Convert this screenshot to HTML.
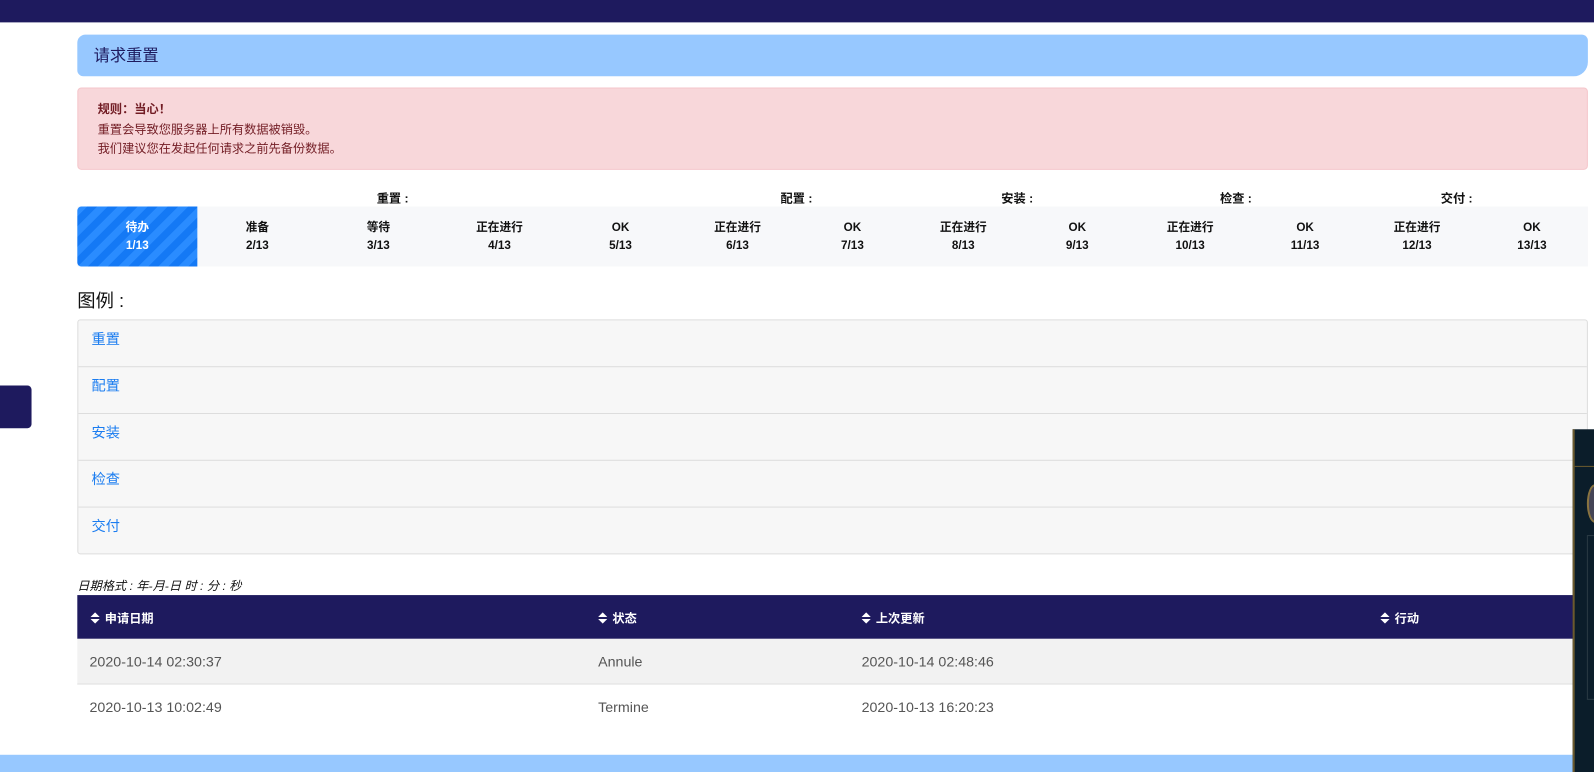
<!DOCTYPE html>
<html><head><meta charset="utf-8"><style>
html,body{margin:0;padding:0;background:#fff;overflow:hidden;width:1594px;height:772px}
#w{position:absolute;left:0;top:0;width:1567px;height:759px;transform:scale(1.01723);transform-origin:0 0;font-family:"Liberation Sans","Noto Sans CJK SC",sans-serif}
.a{position:absolute}
.top{left:0;top:0;width:1567px;height:22px;background:#1e1a5e}
.hdr{left:76px;top:34px;width:1485px;height:41px;background:#97c8ff;border-radius:8px 6px 14px 6px;color:#1e1a5e;font-size:16px;line-height:43px;box-sizing:border-box;padding-left:16px}
.al{left:76px;top:86px;width:1485px;height:81px;background:#f8d7da;border:1px solid #f5c6cb;box-sizing:border-box;border-radius:4px;color:#721c24;font-size:12px;padding:11px 0 0 19px;line-height:19.5px}
.lbl{top:186px;font-size:12px;font-weight:bold;color:#111;transform:translateX(-50%)}
.prog{left:76px;top:203px;width:1485px;height:59px;background:#f7f8fa}
.st{position:absolute;top:215px;font-size:11.5px;font-weight:bold;color:#111;text-align:center;line-height:18px;transform:translateX(-50%)}
.cur{left:76px;top:203px;width:118px;height:59px;border-radius:4px 0 0 4px;background:repeating-linear-gradient(135deg,#2a8cff 0 7px,#1479f5 7px 14px)}
.leg{left:76px;top:314px;width:1485px;border:1px solid #ddd;box-sizing:border-box;border-radius:3px;background:#f7f7f7}
.leg div{height:45px;border-top:1px solid #ddd;color:#1a7cf0;font-size:14px;line-height:36px;padding-left:13px}
.leg div:first-child{border-top:none}
.th{left:76px;top:585px;width:1485px;height:43px;background:#1e1a5e;color:#fff;font-size:12px;font-weight:bold}
.th span{position:absolute;top:14px}
.r{left:76px;width:1485px;height:44px;font-size:14px;color:#555;border-bottom:1px solid #ddd}
.r span{position:absolute;top:14px}
.si{display:inline-block;width:9px;height:11px;vertical-align:-1px;margin-right:5px}
</style></head><body><div id="w">
<div class="a top"></div>
<div class="a hdr">请求重置</div>
<div class="a al"><b>规则：当心！</b><br>重置会导致您服务器上所有数据被销毁。<br>我们建议您在发起任何请求之前先备份数据。</div>
<div class="a lbl" style="left:386px">重置 :</div>
<div class="a lbl" style="left:783px">配置 :</div>
<div class="a lbl" style="left:1000px">安装 :</div>
<div class="a lbl" style="left:1215px">检查 :</div>
<div class="a lbl" style="left:1432px">交付 :</div>
<div class="a prog"></div>
<div class="a cur"></div>
<div class="st" style="left:135px;color:#fff">待办<br>1/13</div>
<div class="st" style="left:253px">准备<br>2/13</div>
<div class="st" style="left:372px">等待<br>3/13</div>
<div class="st" style="left:491px">正在进行<br>4/13</div>
<div class="st" style="left:610px">OK<br>5/13</div>
<div class="st" style="left:725px">正在进行<br>6/13</div>
<div class="st" style="left:838px">OK<br>7/13</div>
<div class="st" style="left:947px">正在进行<br>8/13</div>
<div class="st" style="left:1059px">OK<br>9/13</div>
<div class="st" style="left:1170px">正在进行<br>10/13</div>
<div class="st" style="left:1283px">OK<br>11/13</div>
<div class="st" style="left:1393px">正在进行<br>12/13</div>
<div class="st" style="left:1506px">OK<br>13/13</div>
<div class="a" style="left:76px;top:282px;font-size:18px;color:#111">图例 :</div>
<div class="a leg"><div>重置</div><div>配置</div><div>安装</div><div>检查</div><div>交付</div></div>
<div class="a" style="left:0;top:379px;width:31px;height:42px;background:#1e1a5e;border-radius:0 4px 4px 0"></div>
<div class="a" style="left:76px;top:567px;font-size:12px;font-style:italic;color:#111">日期格式 : 年-月-日 时 : 分 : 秒</div>
<div class="a th">
<span style="left:13px"><svg class="si" viewBox="0 0 9 11"><path d="M0 4.5L4.5 0 9 4.5zM0 6.5L4.5 11 9 6.5z" fill="#fff"/></svg>申请日期</span>
<span style="left:512px"><svg class="si" viewBox="0 0 9 11"><path d="M0 4.5L4.5 0 9 4.5zM0 6.5L4.5 11 9 6.5z" fill="#fff"/></svg>状态</span>
<span style="left:771px"><svg class="si" viewBox="0 0 9 11"><path d="M0 4.5L4.5 0 9 4.5zM0 6.5L4.5 11 9 6.5z" fill="#fff"/></svg>上次更新</span>
<span style="left:1281px"><svg class="si" viewBox="0 0 9 11"><path d="M0 4.5L4.5 0 9 4.5zM0 6.5L4.5 11 9 6.5z" fill="#fff"/></svg>行动</span>
</div>
<div class="a r" style="top:628px;background:#f2f2f2"><span style="left:12px">2020-10-14 02:30:37</span><span style="left:512px">Annule</span><span style="left:771px">2020-10-14 02:48:46</span></div>
<div class="a r" style="top:673px;background:#fff;border-bottom:none"><span style="left:12px">2020-10-13 10:02:49</span><span style="left:512px">Termine</span><span style="left:771px">2020-10-13 16:20:23</span></div>
<div class="a" style="left:0;top:742px;width:1567px;height:17px;background:#97c8ff"></div>
<div class="a" style="left:1546px;top:422px;width:21px;height:337px;background:#0b1d2a;border-left:2px solid #6b5a2e;box-sizing:border-box"></div>
<div class="a" style="left:1548px;top:458px;width:19px;height:1px;background:#6b5a2e"></div>
<div class="a" style="left:1560px;top:476px;width:12px;height:34px;border-radius:50%;border:2px solid #8a7440;background:#445"></div>
<div class="a" style="left:1560px;top:526px;width:7px;height:160px;border:1px solid #2a3a44"></div>
</div></body></html>
